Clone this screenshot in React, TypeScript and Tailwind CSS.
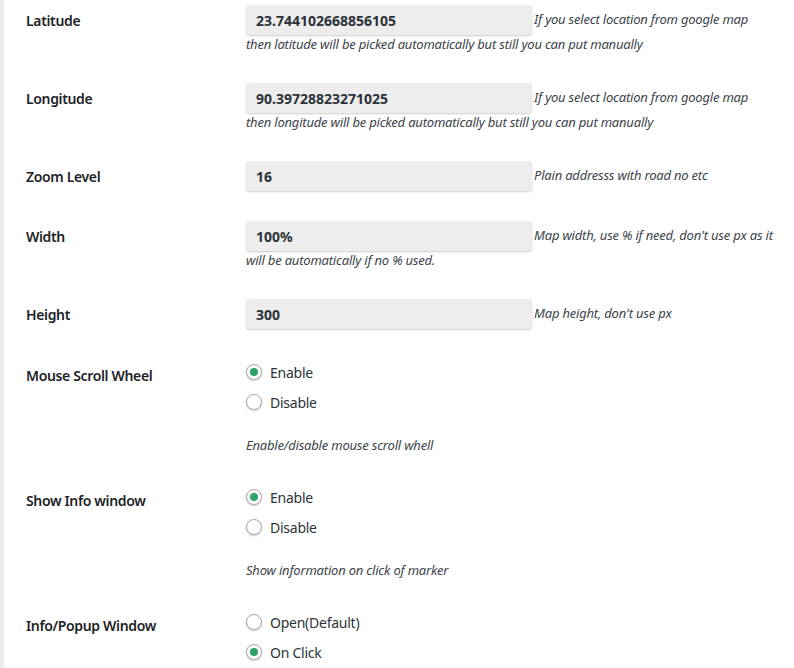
import React from "react";

const font = "font-['Segoe_UI','Noto_Sans',sans-serif]";

function Field({ value }: { value: string }) {
  return (
    <div className="w-[286px] h-[30px] shrink-0 rounded-[4px] bg-[#ededee] shadow-[0_1px_2px_rgba(0,0,0,0.2)] pl-[10px] flex items-center text-[14px] font-bold text-[#2c3338]">
      {value}
    </div>
  );
}

function TextRow({
  label,
  value,
  help1,
  help2,
  first,
}: {
  label: string;
  value: string;
  help1: string;
  help2?: string;
  first?: boolean;
}) {
  return (
    <div className={`flex pb-[15px] ${first ? "pt-[5px]" : "pt-[15px]"}`}>
      <div className="w-[220px] shrink-0 h-[30px] flex items-center text-[14px] font-semibold tracking-[-0.35px] text-[#1d2327]">
        {label}
      </div>
      <div>
        <div className="flex items-center h-[30px]">
          <Field value={value} />
          <span className="ml-[2px] -mt-[1px] italic text-[13px] tracking-[-0.2px] text-[#3c434a] whitespace-nowrap">
            {help1}
          </span>
        </div>
        {help2 && (
          <div className="h-[18px] leading-[18px] italic text-[13px] tracking-[-0.2px] text-[#3c434a] whitespace-nowrap">
            {help2}
          </div>
        )}
      </div>
    </div>
  );
}

function Radio({ label, checked }: { label: string; checked?: boolean }) {
  return (
    <div className="h-[30px] flex items-center">
      <span className="w-4 h-4 rounded-full border border-[#a7aaad] bg-white shadow-[0_1px_2px_rgba(0,0,0,0.2)] flex items-center justify-center">
        {checked && <span className="w-2 h-2 rounded-full bg-[#2ea36b]" />}
      </span>
      <span className="ml-[8px] text-[14px] tracking-[-0.25px] text-[#2c3338]">{label}</span>
    </div>
  );
}

function RadioRow({
  label,
  options,
  help,
}: {
  label: string;
  options: { label: string; checked?: boolean }[];
  help?: string;
}) {
  return (
    <div className="flex pt-[13px] pb-[15px]">
      <div className="w-[220px] shrink-0 pt-[10px] h-[28px] leading-[18px] text-[14px] font-semibold tracking-[-0.35px] text-[#1d2327]">
        {label}
      </div>
      <div>
        {options.map((o) => (
          <Radio key={o.label} label={o.label} checked={o.checked} />
        ))}
        {help && (
          <div className="mt-[19px] h-[18px] leading-[18px] italic text-[13px] tracking-[-0.2px] text-[#3c434a]">
            {help}
          </div>
        )}
      </div>
    </div>
  );
}

export default function App() {
  return (
    <div className={`${font} flex w-[794px] h-[668px] overflow-hidden bg-white`}>
      <div className="w-[4px] shrink-0 bg-[#ececec]" />
      <div className="pl-[22px] flex-1">
        <TextRow
          first
          label="Latitude"
          value="23.744102668856105"
          help1="If you select location from google map"
          help2="then latitude will be picked automatically but still you can put manually"
        />
        <TextRow
          label="Longitude"
          value="90.39728823271025"
          help1="If you select location from google map"
          help2="then longitude will be picked automatically but still you can put manually"
        />
        <TextRow label="Zoom Level" value="16" help1="Plain addresss with road no etc" />
        <TextRow
          label="Width"
          value="100%"
          help1="Map width, use % if need, don't use px as it"
          help2="will be automatically if no % used."
        />
        <TextRow label="Height" value="300" help1="Map height, don't use px" />
        <RadioRow
          label="Mouse Scroll Wheel"
          options={[{ label: "Enable", checked: true }, { label: "Disable" }]}
          help="Enable/disable mouse scroll whell"
        />
        <RadioRow
          label="Show Info window"
          options={[{ label: "Enable", checked: true }, { label: "Disable" }]}
          help="Show information on click of marker"
        />
        <RadioRow
          label="Info/Popup Window"
          options={[{ label: "Open(Default)" }, { label: "On Click", checked: true }]}
        />
      </div>
    </div>
  );
}
